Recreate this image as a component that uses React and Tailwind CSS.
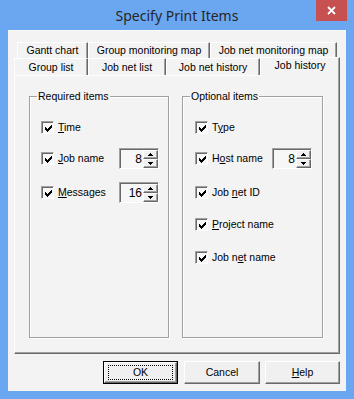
import React from 'react';

function Check() {
  return (
    <span className="flex h-[13px] w-[13px] shrink-0 items-center justify-center border border-b-white border-l-[#a0a0a0] border-r-white border-t-[#a0a0a0] bg-[#f7f7f7] shadow-[inset_1px_1px_0_#696969]">
      <svg width="7" height="7" viewBox="0 0 7 7" className="ml-[1px] mt-[1px]">
        <path d="M0 2h1v1h1v1h1V3h1V2h1V1h1V0h1v3H6v1H5v1H4v1H3v1H2V6H1V5H0z" fill="#000" />
      </svg>
    </span>
  );
}

function SpinBtn({ up }) {
  return (
    <div className="flex h-[10px] items-center justify-center border-b border-l border-r border-t border-b-[#696969] border-l-white border-r-[#696969] border-t-white bg-[#f0f0f0] shadow-[inset_-1px_-1px_0_#a0a0a0]">
      <svg width="5" height="3" viewBox="0 0 5 3">
        <path d={up ? 'M2 0h1v1h1v1h1v1H0V2h1V1h1z' : 'M0 0h5v1H4v1H3v1H2V2H1V1H0z'} fill="#000" />
      </svg>
    </div>
  );
}

function Spin({ value }) {
  return (
    <div className="flex h-[21px] w-[40px] shrink-0 border border-b-white border-l-[#a0a0a0] border-r-white border-t-[#a0a0a0] bg-[#f7f7f7] shadow-[inset_1px_1px_0_#696969]">
      <div className="flex flex-1 items-center justify-end pr-[1px] pt-[1px] text-[12px] leading-none">{value}</div>
      <div className="flex w-[15px] flex-col pt-[1px]">
        <SpinBtn up />
        <SpinBtn />
      </div>
    </div>
  );
}

function Item({ label, spin, labelWidth, className }) {
  return (
    <div className={`flex h-[21px] items-center ${className}`}>
      <Check />
      <span className={`ml-[4px] ${labelWidth}`}>{label}</span>
      {spin && <Spin value={spin} />}
    </div>
  );
}

function Tab({ children, width, className = '' }) {
  return (
    <div
      className={`flex items-center justify-center border-l border-r border-t border-l-white border-r-[#696969] border-t-white shadow-[inset_-1px_0_0_#a0a0a0] ${width} ${className}`}
    >
      {children}
    </div>
  );
}

function Btn({ children, width, isDefault, className = '' }) {
  return (
    <button
      className={`flex h-[23px] items-center justify-center ${width} ${isDefault ? 'border border-black' : ''} ${className}`}
    >
      <span className="flex h-full w-full items-center justify-center border border-b-[#696969] border-l-white border-r-[#696969] border-t-white bg-[#f0f0f0] shadow-[inset_-1px_-1px_0_#a0a0a0]">
        {isDefault ? (
          <span className="flex h-[15px] w-[65px] items-center justify-center border border-dotted border-black">{children}</span>
        ) : (
          children
        )}
      </span>
    </button>
  );
}

export default function App() {
  return (
    <div className="flex h-[399px] w-[354px] flex-col bg-[#6ba7f0] font-['Liberation_Sans',Arial,sans-serif] text-[10.5px] text-black">
      <div className="grid h-[30px] grid-cols-[1fr_auto_1fr] items-center">
        <div />
        <div className="font-['Noto_Sans',sans-serif] text-[14px] text-[#262626]">Specify Print Items</div>
        <div className="flex justify-end self-start pr-[7px]">
          <div className="flex h-[21px] w-[31px] items-center justify-center bg-[#c75050]">
            <svg width="9" height="9" viewBox="0 0 9 9">
              <path d="M1 1l7 7M8 1L1 8" stroke="#fff" strokeWidth="1.8" />
            </svg>
          </div>
        </div>
      </div>

      <div className="mx-[8px] flex h-[361px] flex-col border-t border-t-[#fafafa] bg-[#f3f3f3] px-[6px] pt-[11px]">
        <div className="flex h-[16px] pl-[3px]">
          <Tab width="w-[71px]">Gantt chart</Tab>
          <Tab width="w-[122px]">Group monitoring map</Tab>
          <Tab width="w-[127px]">Job net monitoring map</Tab>
        </div>
        <div className="flex h-[17px] items-end">
          <Tab width="w-[74px]" className="h-[17px] pt-[1px]">Group list</Tab>
          <Tab width="w-[78px]" className="h-[17px] pt-[1px]">Job net list</Tab>
          <Tab width="w-[94px]" className="h-[17px] pt-[1px]">Job net history</Tab>
          <Tab width="w-[80px]" className="relative z-10 mb-[-1px] h-[19px] bg-[#f3f3f3] pb-[2px]">Job history</Tab>
        </div>

        <div className="flex h-[279px] gap-[13px] border-b border-l border-r border-t border-b-[#696969] border-l-white border-r-[#696969] border-t-white pl-[14px] pt-[14px] shadow-[inset_-1px_-1px_0_#a0a0a0]">
          <fieldset className="m-0 h-[248px] w-[140px] border border-[#a0a0a0] p-0 shadow-[1px_1px_0_#fff,inset_1px_1px_0_#fff]">
            <legend className="ml-[7px] px-[1px] leading-[12px]">Required items</legend>
            <div className="flex flex-col pl-[11px]">
              <Item className="mt-[15px]" labelWidth="w-[61px]" label={<><u>T</u>ime</>} />
              <Item className="mt-[10px]" labelWidth="w-[61px]" label={<><u>J</u>ob name</>} spin="8" />
              <Item className="mt-[13px]" labelWidth="w-[61px]" label={<><u>M</u>essages</>} spin="16" />
            </div>
          </fieldset>
          <fieldset className="m-0 h-[248px] w-[141px] border border-[#a0a0a0] p-0 shadow-[1px_1px_0_#fff,inset_1px_1px_0_#fff]">
            <legend className="ml-[7px] px-[1px] leading-[12px]">Optional items</legend>
            <div className="flex flex-col pl-[12px]">
              <Item className="mt-[15px]" labelWidth="w-[60px]" label={<>T<u>y</u>pe</>} />
              <Item className="mt-[10px]" labelWidth="w-[60px]" label={<>H<u>o</u>st name</>} spin="8" />
              <Item className="mt-[13px]" labelWidth="w-[80px]" label={<>Job <u>n</u>et ID</>} />
              <Item className="mt-[11px]" labelWidth="w-[80px]" label={<><u>P</u>roject name</>} />
              <Item className="mt-[12px]" labelWidth="w-[80px]" label={<>Job n<u>e</u>t name</>} />
            </div>
          </fieldset>
        </div>

        <div className="mt-[7px] flex justify-end">
          <Btn width="w-[75px]" isDefault>OK</Btn>
          <Btn width="w-[76px]" className="ml-[6px]">Cancel</Btn>
          <Btn width="w-[75px]" className="ml-[5px]"><span><u>H</u>elp</span></Btn>
        </div>
      </div>
    </div>
  );
}
